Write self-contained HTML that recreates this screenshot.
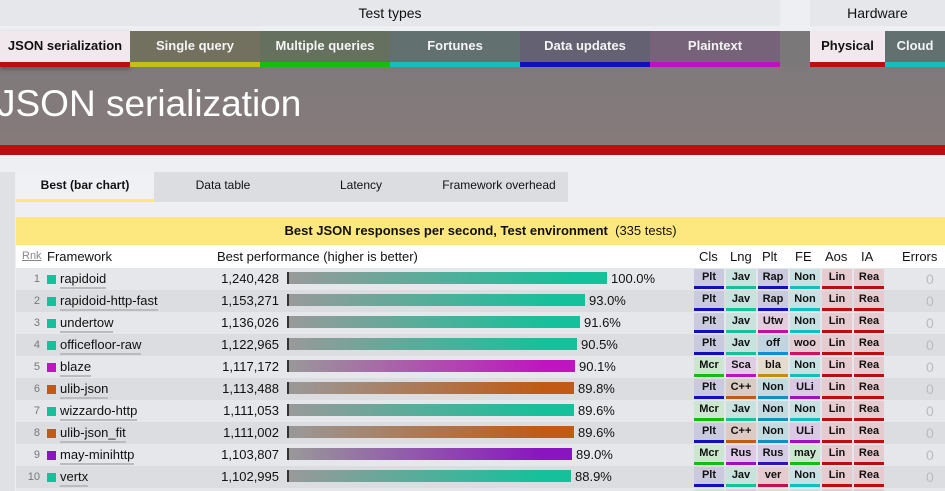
<!DOCTYPE html><html><head><style>
*{margin:0;padding:0;box-sizing:border-box}
html,body{width:945px;height:491px;overflow:hidden}
body{background:#eeeff2;font-family:"Liberation Sans",sans-serif;position:relative;color:#111}
.a{position:absolute}
.tab{position:absolute;top:31px;height:36px;width:130px;text-align:center;font-weight:bold;font-size:13px;color:#f4f4f4;line-height:30px;background:#6f7070}
.tab i{position:absolute;left:0;right:0;bottom:0;height:5px}
.row{position:absolute;left:16px;width:929px;height:22px;font-size:13px;line-height:22px}
.rk{position:absolute;left:0;width:24px;text-align:right;color:#777;font-size:11px}
.sq{position:absolute;left:31px;top:7px;width:9px;height:9px}
.nm{position:absolute;left:44px;border-bottom:2px solid #bbb;line-height:17px;top:2px}
.v{position:absolute;left:201px;width:62px;text-align:right}
.bar{position:absolute;left:271px;top:4px;height:12px;border-left:2px solid #333}
.pc{position:absolute}
.t{position:absolute;top:1px;width:30px;height:20px;font-size:11px;font-weight:bold;text-align:center;line-height:17px;border-bottom:3px solid}
.z{position:absolute;left:910px;color:#bbb;font-size:14px}
</style></head><body>
<div class="a" style="left:0;top:0;width:780px;height:26px;background:#e6e7ea;text-align:center;font-size:14px;line-height:26px">Test types</div>
<div class="a" style="left:810px;top:0;width:135px;height:26px;background:#e6e7ea;text-align:center;font-size:14px;line-height:26px">Hardware</div>
<div class="a" style="left:0;top:67px;width:945px;height:78px;background:linear-gradient(#7e7a7b,#877a7b)"></div>
<div class="a" style="left:130px;top:31px;width:650px;height:36px;background:#6f7070"></div>
<div class="a" style="left:780px;top:31px;width:165px;height:36px;background:#7a7878"></div>
<div class="tab" style="left:0;background:#f0e8ec;color:#111;box-shadow:0 2px 4px rgba(0,0,0,.3)">JSON serialization<i style="background:#c00c0c"></i></div>
<div class="tab" style="left:130px;background:#72715f">Single query<i style="background:#c4c010"></i></div>
<div class="tab" style="left:260px;background:#66705f">Multiple queries<i style="background:#10c010"></i></div>
<div class="tab" style="left:390px;background:#637070">Fortunes<i style="background:#10c0c0"></i></div>
<div class="tab" style="left:520px;background:#646272">Data updates<i style="background:#1010c0"></i></div>
<div class="tab" style="left:650px;background:#76637a">Plaintext<i style="background:#c010c0"></i></div>
<div class="tab" style="left:810px;width:75px;background:#f0e8ec;color:#111">Physical<i style="background:#c00c0c"></i></div>
<div class="tab" style="left:885px;width:60px;background:#637070">Cloud<i style="background:#10c0c0"></i></div>
<div class="a" style="left:-3px;top:80px;font-size:37px;color:#fff;line-height:48px">JSON serialization</div>
<div class="a" style="left:0;top:145px;width:945px;height:10px;background:#c00c0c"></div>
<div class="a" style="left:0;top:172px;width:15px;height:319px;background:#e0e1e4"></div>
<div class="a" style="left:16px;top:172px;width:552px;height:30px;background:#dcdde0"></div>
<div class="a" style="left:16px;top:172px;width:138px;height:30px;background:#f0f1f4;border-bottom:3px solid #fde77f;text-align:center;font-weight:bold;font-size:12px;line-height:27px">Best (bar chart)</div>
<div class="a" style="left:154px;top:172px;width:138px;text-align:center;font-size:12px;line-height:27px">Data table</div>
<div class="a" style="left:292px;top:172px;width:138px;text-align:center;font-size:12px;line-height:27px">Latency</div>
<div class="a" style="left:430px;top:172px;width:138px;text-align:center;font-size:12px;line-height:27px">Framework overhead</div>
<div class="a" style="left:16px;top:217px;width:929px;height:28px;background:#fde77f;text-align:center;font-size:13px;line-height:28px"><b>Best JSON responses per second, Test environment</b> &nbsp;(335 tests)</div>
<div class="a" style="left:16px;top:245px;width:929px;height:23px;background:#fff;font-size:13px;line-height:23px">
<span class="a" style="left:6px;font-size:11px;color:#888;text-decoration:underline">Rnk</span><span class="a" style="left:31px">Framework</span><span class="a" style="left:201px">Best performance (higher is better)</span>
<span class="a" style="left:683px">Cls</span><span class="a" style="left:714px">Lng</span><span class="a" style="left:746px">Plt</span><span class="a" style="left:779px">FE</span><span class="a" style="left:809px">Aos</span><span class="a" style="left:845px">IA</span><span class="a" style="left:886px">Errors</span></div>
<div id="rows"></div>
<script>
var C={t:'#14c19a',m:'#c014c0',o:'#c05a14',p:'#8a14c0'};
var T={Plt:['#cacadf','#1010c0'],Jav:['#c8e2de','#14c19a'],Rap:['#cacadf','#1010c0'],Non:['#c8e2e4','#10c0c0'],Lin:['#e6ccd0','#c00c0c'],Rea:['#e6ccd0','#c00c0c'],Utw:['#e4cce0','#c010a0'],off:['#c2d4e0','#1090d0'],woo:['#e4ccd4','#d01060'],Mcr:['#cce6d0','#10c010'],Sca:['#e0cce4','#c010c0'],bla:['#e4dccc','#c09010'],'C++':['#dccac4','#c05a14'],NonP:['#c2dae0','#1090c0'],ULi:['#dac8e4','#a010c0'],RusL:['#dccae6','#a010c0'],RusP:['#d4cce4','#3010c0'],may:['#cce6d0','#10c010'],ver:['#e4ccd0','#c01050']};
var R=[[1,'t','rapidoid','1,240,428',100,'Plt Jav Rap Non'],[2,'t','rapidoid-http-fast','1,153,271',93,'Plt Jav Rap Non'],[3,'t','undertow','1,136,026',91.6,'Plt Jav Utw Non'],[4,'t','officefloor-raw','1,122,965',90.5,'Plt Jav off woo'],[5,'m','blaze','1,117,172',90.1,'Mcr Sca bla Non'],[6,'o','ulib-json','1,113,488',89.8,'Plt C++ NonP ULi'],[7,'t','wizzardo-http','1,111,053',89.6,'Mcr Jav NonP Non'],[8,'o','ulib-json_fit','1,111,002',89.6,'Plt C++ NonP ULi'],[9,'p','may-minihttp','1,103,807',89,'Mcr RusL RusP may'],[10,'t','vertx','1,102,995',88.9,'Plt Jav ver Non'],[11,'m','','',88.8,'Mcr Sca bla Non']];
var h='';R.forEach(function(r,i){var y=268+i*22,bg=i%2?'#dcdde0':'#e6e7ea',w=Math.round(320*r[4]/100);
h+='<div class="row" style="top:'+y+'px;background:'+bg+'">';
if(r[2]){h+='<span class="rk">'+r[0]+'</span><span class="sq" style="background:'+C[r[1]]+'"></span><span class="nm">'+r[2]+'</span><span class="v">'+r[3]+'</span><span class="pc" style="left:'+(275+w)+'px">'+r[4].toFixed(1)+'%</span><span class="z">0</span>';}
h+='<span class="bar" style="width:'+w+'px;background:linear-gradient(90deg,#999,'+C[r[1]]+' 90%)"></span>';
var tg=r[5].split(' ').concat(['Lin','Rea']);tg.forEach(function(k,j){var c=T[k];h+='<span class="t" style="left:'+(678+j*32)+'px;background:'+c[0]+';border-color:'+c[1]+'">'+k.replace('NonP','Non').replace(/(Rus)[LP]$/,'$1')+'</span>';});
h+='</div>';});
document.getElementById('rows').innerHTML=h;
</script>
</body></html>
